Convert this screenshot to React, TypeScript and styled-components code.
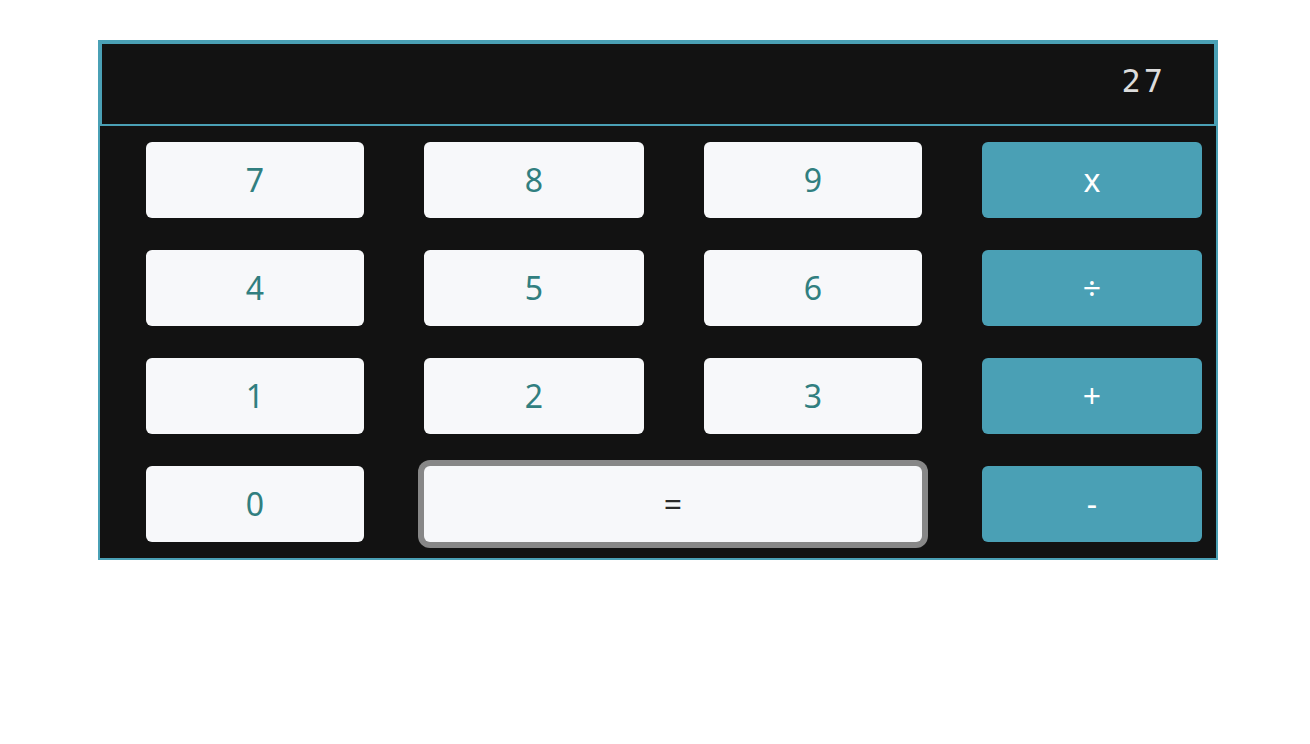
import React from "react";
import styled, { createGlobalStyle } from "styled-components";

const Global = createGlobalStyle`
  html, body { margin: 0; padding: 0; background: #ffffff; }
  body { font-family: "Noto Sans", "Open Sans", sans-serif; }
`;

const Calculator = styled.div`
  box-sizing: border-box;
  width: 1120px;
  margin: 40px 0 0 98px;
  border: 2px solid #4aa0b5;
  background: #121212;
  display: flex;
  flex-direction: column;
`;

const Display = styled.div`
  box-sizing: border-box;
  height: 84px;
  border: 2px solid #4aa0b5;
  display: flex;
  align-items: center;
  justify-content: flex-end;
  padding: 0 48px 6px 0;
  color: #dcdcdc;
  font-family: "DejaVu Sans Mono", monospace;
  font-size: 32px;
  letter-spacing: 3px;
  line-height: 1;
`;

const Keypad = styled.div`
  display: grid;
  grid-template-columns: 218px 220px 218px 220px;
  grid-auto-rows: 76px;
  column-gap: 60px;
  row-gap: 32px;
  padding: 16px 14px 16px 46px;
`;

const Key = styled.button<{ $op?: boolean; $wide?: boolean; $focused?: boolean }>`
  border: none;
  border-radius: 6px;
  margin: 0;
  padding: 0;
  font-family: "Noto Sans", "Open Sans", sans-serif;
  font-weight: 400;
  font-size: 32px;
  line-height: 1;
  cursor: pointer;
  background: ${(p) => (p.$op ? "#4aa0b5" : "#f7f8fa")};
  color: ${(p) => (p.$op ? "#ffffff" : p.$focused ? "#2a2a2a" : "#317f80")};
  grid-column: ${(p) => (p.$wide ? "span 2" : "auto")};
  box-shadow: ${(p) => (p.$focused ? "0 0 0 6px #878787" : "none")};
  display: flex;
  align-items: center;
  justify-content: center;
`;

const rows: { label: string; op?: boolean; wide?: boolean; focused?: boolean }[] = [
  { label: "7" }, { label: "8" }, { label: "9" }, { label: "x", op: true },
  { label: "4" }, { label: "5" }, { label: "6" }, { label: "÷", op: true },
  { label: "1" }, { label: "2" }, { label: "3" }, { label: "+", op: true },
  { label: "0" }, { label: "=", wide: true, focused: true }, { label: "-", op: true },
];

export default function App() {
  return (
    <>
      <Global />
      <Calculator>
        <Display>27</Display>
        <Keypad>
          {rows.map((k, i) => (
            <Key key={i} $op={k.op} $wide={k.wide} $focused={k.focused}>
              {k.label}
            </Key>
          ))}
        </Keypad>
      </Calculator>
    </>
  );
}
